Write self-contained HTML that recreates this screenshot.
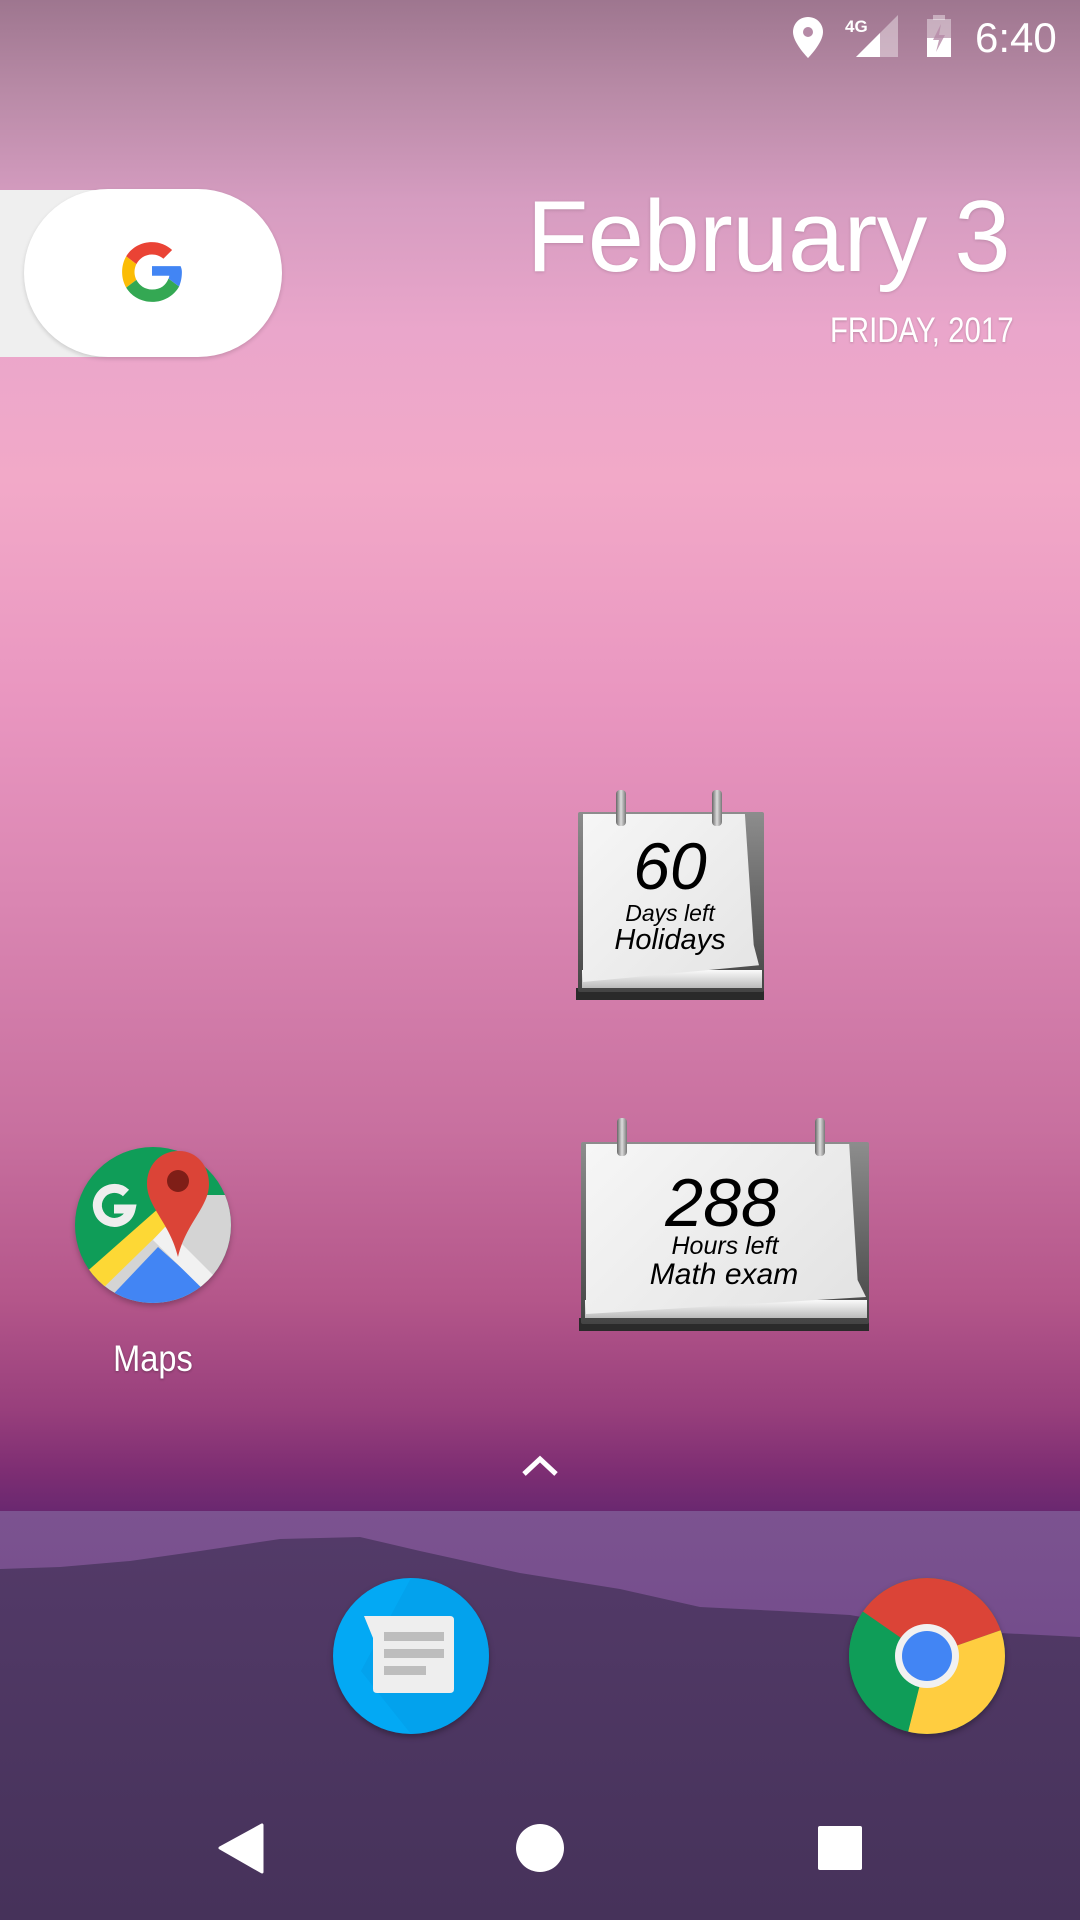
<!DOCTYPE html>
<html><head><meta charset="utf-8"><style>
*{margin:0;padding:0;box-sizing:border-box}
html,body{width:1080px;height:1920px;overflow:hidden}
body{position:relative;font-family:"Liberation Sans",sans-serif;
background:linear-gradient(180deg,#9e768f 0px,#b88aa6 90px,#d59cc0 200px,#eaa6cb 330px,#f2a9c8 480px,#e996c0 700px,#da86b2 900px,#c8709f 1130px,#b4568a 1300px,#983f7c 1410px,#7e2e73 1470px,#6a2870 1511px);}
.abs{position:absolute}
.cal-text{font-style:italic;color:#000;text-align:center;position:absolute;left:0;right:0;white-space:nowrap}
</style></head><body>

<svg class="abs" style="left:780px;top:0" width="300" height="80" viewBox="0 0 300 80">
  <path d="M28 17 C19 17 13 24 13 32 C13 43 28 58 28 58 C28 58 43 43 43 32 C43 24 37 17 28 17 Z" fill="#fff"/>
  <circle cx="28" cy="32" r="5" fill="#b58aa6"/>
  <text x="65" y="32" font-family="Liberation Sans" font-weight="bold" font-size="17" fill="#fff">4G</text>
  <path d="M118 15 L118 57 L76 57 Z" fill="#fff" fill-opacity="0.4"/>
  <path d="M100 33 L100 57 L76 57 Z" fill="#fff"/>
  <rect x="147" y="19" width="24" height="38" fill="#fff" fill-opacity="0.4"/>
  <rect x="153" y="15" width="12" height="5" fill="#fff" fill-opacity="0.4"/>
  <rect x="147" y="38" width="24" height="19" fill="#fff"/>
  <path d="M161 24 L153 40 L159 40 L156 52 L165 35 L159 35 Z" fill="#b58aa6" fill-opacity="0.8"/>
  <text x="195" y="52" font-family="Liberation Sans" font-size="42" fill="#fff">6:40</text>
</svg>

<div class="abs" style="left:0;top:190px;width:160px;height:167px;background:#efefef"></div>
<div class="abs" style="left:24px;top:189px;width:258px;height:168px;background:#fff;border-radius:84px;box-shadow:0 2px 4px rgba(0,0,0,.15)"></div>
<svg class="abs" style="left:117px;top:237px" width="70" height="70" viewBox="0 0 48 48">
  <path d="M24 3.5c5.4 0 10.2 2.1 13.8 5.4l-6 6C29.700 13.1 27 12 24 12c-4.7 0-8.7 2.7-10.7 6.6L6.3 13.3C9.7 7.4 16.4 3.5 24 3.5z" fill="#EA4335"/>
  <path d="M6.3 13.3l7 5.3C12.5 20.2 12 22 12 24s.5 3.8 1.3 5.4l-7 5.3C4.5 31.6 3.5 27.900 3.5 24s1-7.6 2.8-10.7z" fill="#FBBC05"/>
  <path d="M13.3 29.4C15.3 33.3 19.3 36 24 36c5.9 0 9.5-2.9 11.3-7.5l7.3 5.4C39 40.3 32 44.5 24 44.5c-7.6 0-14.3-4-17.7-9.8z" fill="#34A853"/>
  <path d="M24 20h19.6c.6 1.3.9 2.7.9 4 0 3.8-.7 7-1.900 9.9l-7.3-5.4c.3-.6.5-1.2.6-1.9H24z" fill="#4285F4"/>
</svg>

<div class="abs" style="right:70px;top:180px;font-size:101px;color:#fff;white-space:nowrap;letter-spacing:-0.5px;text-shadow:0 1px 3px rgba(0,0,0,.15)">February 3</div>
<div class="abs" style="right:66px;top:311px;font-size:35px;color:#fff;white-space:nowrap;transform:scaleX(0.84);transform-origin:right center;text-shadow:0 1px 3px rgba(0,0,0,.2)">FRIDAY, 2017</div>

<div class="abs" style="left:574px;top:790px;width:196px;height:212px">
  <div class="abs" style="left:2px;top:198px;width:188px;height:12px;background:#2a2a2a"></div>
  <div class="abs" style="left:4px;top:22px;width:186px;height:180px;background:linear-gradient(#8d8d8d,#444);border-radius:2px"></div>
  <div class="abs" style="left:8px;top:180px;width:180px;height:18px;background:linear-gradient(#fafafa,#bbb)"></div>
  <div class="abs" style="left:9px;top:24px;width:176px;height:168px;background:linear-gradient(135deg,#f6f6f6,#e4e4e4);clip-path:polygon(0 0,92% 0,97% 78%,100% 90%,0 100%)"></div>
  <div class="abs" style="left:42px;top:0;width:10px;height:36px;background:linear-gradient(90deg,#666,#ddd,#777);border-radius:4px"></div>
  <div class="abs" style="left:138px;top:0;width:10px;height:36px;background:linear-gradient(90deg,#666,#ddd,#777);border-radius:4px"></div>
  <div class="cal-text" style="top:38px;font-size:66px;left:-4px">60</div>
  <div class="cal-text" style="top:110px;font-size:23px;left:-4px">Days left</div>
  <div class="cal-text" style="top:134px;font-size:29px;left:-4px">Holidays</div>
</div>

<div class="abs" style="left:577px;top:1118px;width:298px;height:215px">
  <div class="abs" style="left:2px;top:200px;width:290px;height:13px;background:#2a2a2a"></div>
  <div class="abs" style="left:4px;top:24px;width:288px;height:182px;background:linear-gradient(#8d8d8d,#444);border-radius:2px"></div>
  <div class="abs" style="left:8px;top:182px;width:282px;height:18px;background:linear-gradient(#fafafa,#bbb)"></div>
  <div class="abs" style="left:9px;top:26px;width:280px;height:170px;background:linear-gradient(135deg,#f6f6f6,#e2e2e2);clip-path:polygon(0 0,94% 0,97% 80%,100% 90%,0 100%)"></div>
  <div class="abs" style="left:40px;top:0;width:10px;height:38px;background:linear-gradient(90deg,#666,#ddd,#777);border-radius:4px"></div>
  <div class="abs" style="left:238px;top:0;width:10px;height:38px;background:linear-gradient(90deg,#666,#ddd,#777);border-radius:4px"></div>
  <div class="cal-text" style="top:46px;font-size:68px;left:-8px">288</div>
  <div class="cal-text" style="top:114px;font-size:25px;left:-2px">Hours left</div>
  <div class="cal-text" style="top:140px;font-size:30px;left:-4px">Math exam</div>
</div>

<svg class="abs" style="left:73px;top:1145px;filter:drop-shadow(0 3px 3px rgba(0,0,0,.25))" width="160" height="160" viewBox="0 0 160 160">
  <defs><clipPath id="mc"><circle cx="80" cy="80" r="78"/></clipPath></defs>
  <g clip-path="url(#mc)">
    <rect width="160" height="160" fill="#0f9d58"/>
    <path d="M0 160 L105 50 L160 50 L160 160 Z" fill="#d4d4d4"/>
    <path d="M30 160 L85 102 L150 160 Z" fill="#4285f4"/>
    <path d="M10 130 L95 55 L105 70 L25 148 Z" fill="#fdd835"/>
    <path d="M80 95 L92 82 L160 150 L148 162 Z" fill="#f1f1f1"/>
    <path d="M53 48 a17 17 0 1 0 5 16 h-17" fill="none" stroke="#eee" stroke-width="9"/>
  </g>
  <path d="M106 6 C86 6 74 21 74 39 C74 62 97 78 105 112 C113 78 136 62 136 39 C136 21 124 6 106 6 Z" fill="#db4437"/>
  <circle cx="105" cy="36" r="11" fill="#7f1e17"/>
</svg>
<div class="abs" style="left:73px;width:160px;top:1338px;text-align:center;color:#fff;font-size:37px;transform:scaleX(0.88);text-shadow:0 1px 3px rgba(0,0,0,.3)">Maps</div>

<svg class="abs" style="left:520px;top:1450px" width="40" height="30" viewBox="0 0 40 30">
  <path d="M4 24 L20 9 L36 24" fill="none" stroke="#fff" stroke-width="5"/>
</svg>

<div class="abs" style="left:0;top:1511px;width:1080px;height:409px;background:linear-gradient(#7c5390,#744d8c 120px)"></div>
<svg class="abs" style="left:0;top:1511px" width="1080" height="409" viewBox="0 0 1080 409">
  <defs><linearGradient id="mt" x1="0" y1="0" x2="0" y2="1"><stop offset="0" stop-color="#533a68"/><stop offset="1" stop-color="#46325a"/></linearGradient></defs>
  <path d="M0 58 L60 56 L130 50 L200 40 L280 28 L360 26 L420 40 L520 62 L620 78 L700 96 L780 100 L850 104 L920 116 L1000 122 L1080 126 L1080 409 L0 409 Z" fill="url(#mt)"/>
</svg>

<svg class="abs" style="left:331px;top:1576px;filter:drop-shadow(0 3px 3px rgba(0,0,0,.3))" width="160" height="160" viewBox="0 0 160 160">
  <circle cx="80" cy="80" r="78" fill="#03a9f4"/>
  <path d="M80 2 A78 78 0 0 1 80 158 L30 95 Z" fill="#039be5" opacity=".5"/>
  <path d="M33 40 L119 40 Q123 40 123 44 L123 113 Q123 117 119 117 L46 117 Q42 117 42 113 L42 62 Z" fill="#eeeeee"/>
  <rect x="53" y="56" width="60" height="9" fill="#bdbdbd"/>
  <rect x="53" y="73" width="60" height="9" fill="#bdbdbd"/>
  <rect x="53" y="90" width="42" height="9" fill="#bdbdbd"/>
</svg>

<svg class="abs" style="left:847px;top:1576px;filter:drop-shadow(0 3px 3px rgba(0,0,0,.3))" width="160" height="160" viewBox="0 0 160 160">
  <defs><clipPath id="cc"><circle cx="80" cy="80" r="78"/></clipPath></defs>
  <g clip-path="url(#cc)">
    <rect width="160" height="160" fill="#0f9d58"/>
    <path d="M80 80 L0 60 L0 0 L160 0 L160 52 Z" fill="#db4437"/>
    <path d="M80 80 L160 52 L160 160 L60 160 Z" fill="#ffcd40"/>
    <path d="M80 80 L8 30 L0 30 L0 160 L60 160 Z" fill="#0f9d58"/>
  </g>
  <circle cx="80" cy="80" r="32" fill="#f1f1f1"/>
  <circle cx="80" cy="80" r="25" fill="#4285f4"/>
</svg>

<svg class="abs" style="left:0;top:1810px" width="1080" height="80" viewBox="0 0 1080 80">
  <path d="M262 15 L262 62 L220 38 Z" fill="#fff" stroke="#fff" stroke-width="3" stroke-linejoin="round"/>
  <circle cx="540" cy="38" r="24" fill="#fff"/>
  <rect x="818" y="16" width="44" height="44" rx="2" fill="#fff"/>
</svg>

</body></html>
